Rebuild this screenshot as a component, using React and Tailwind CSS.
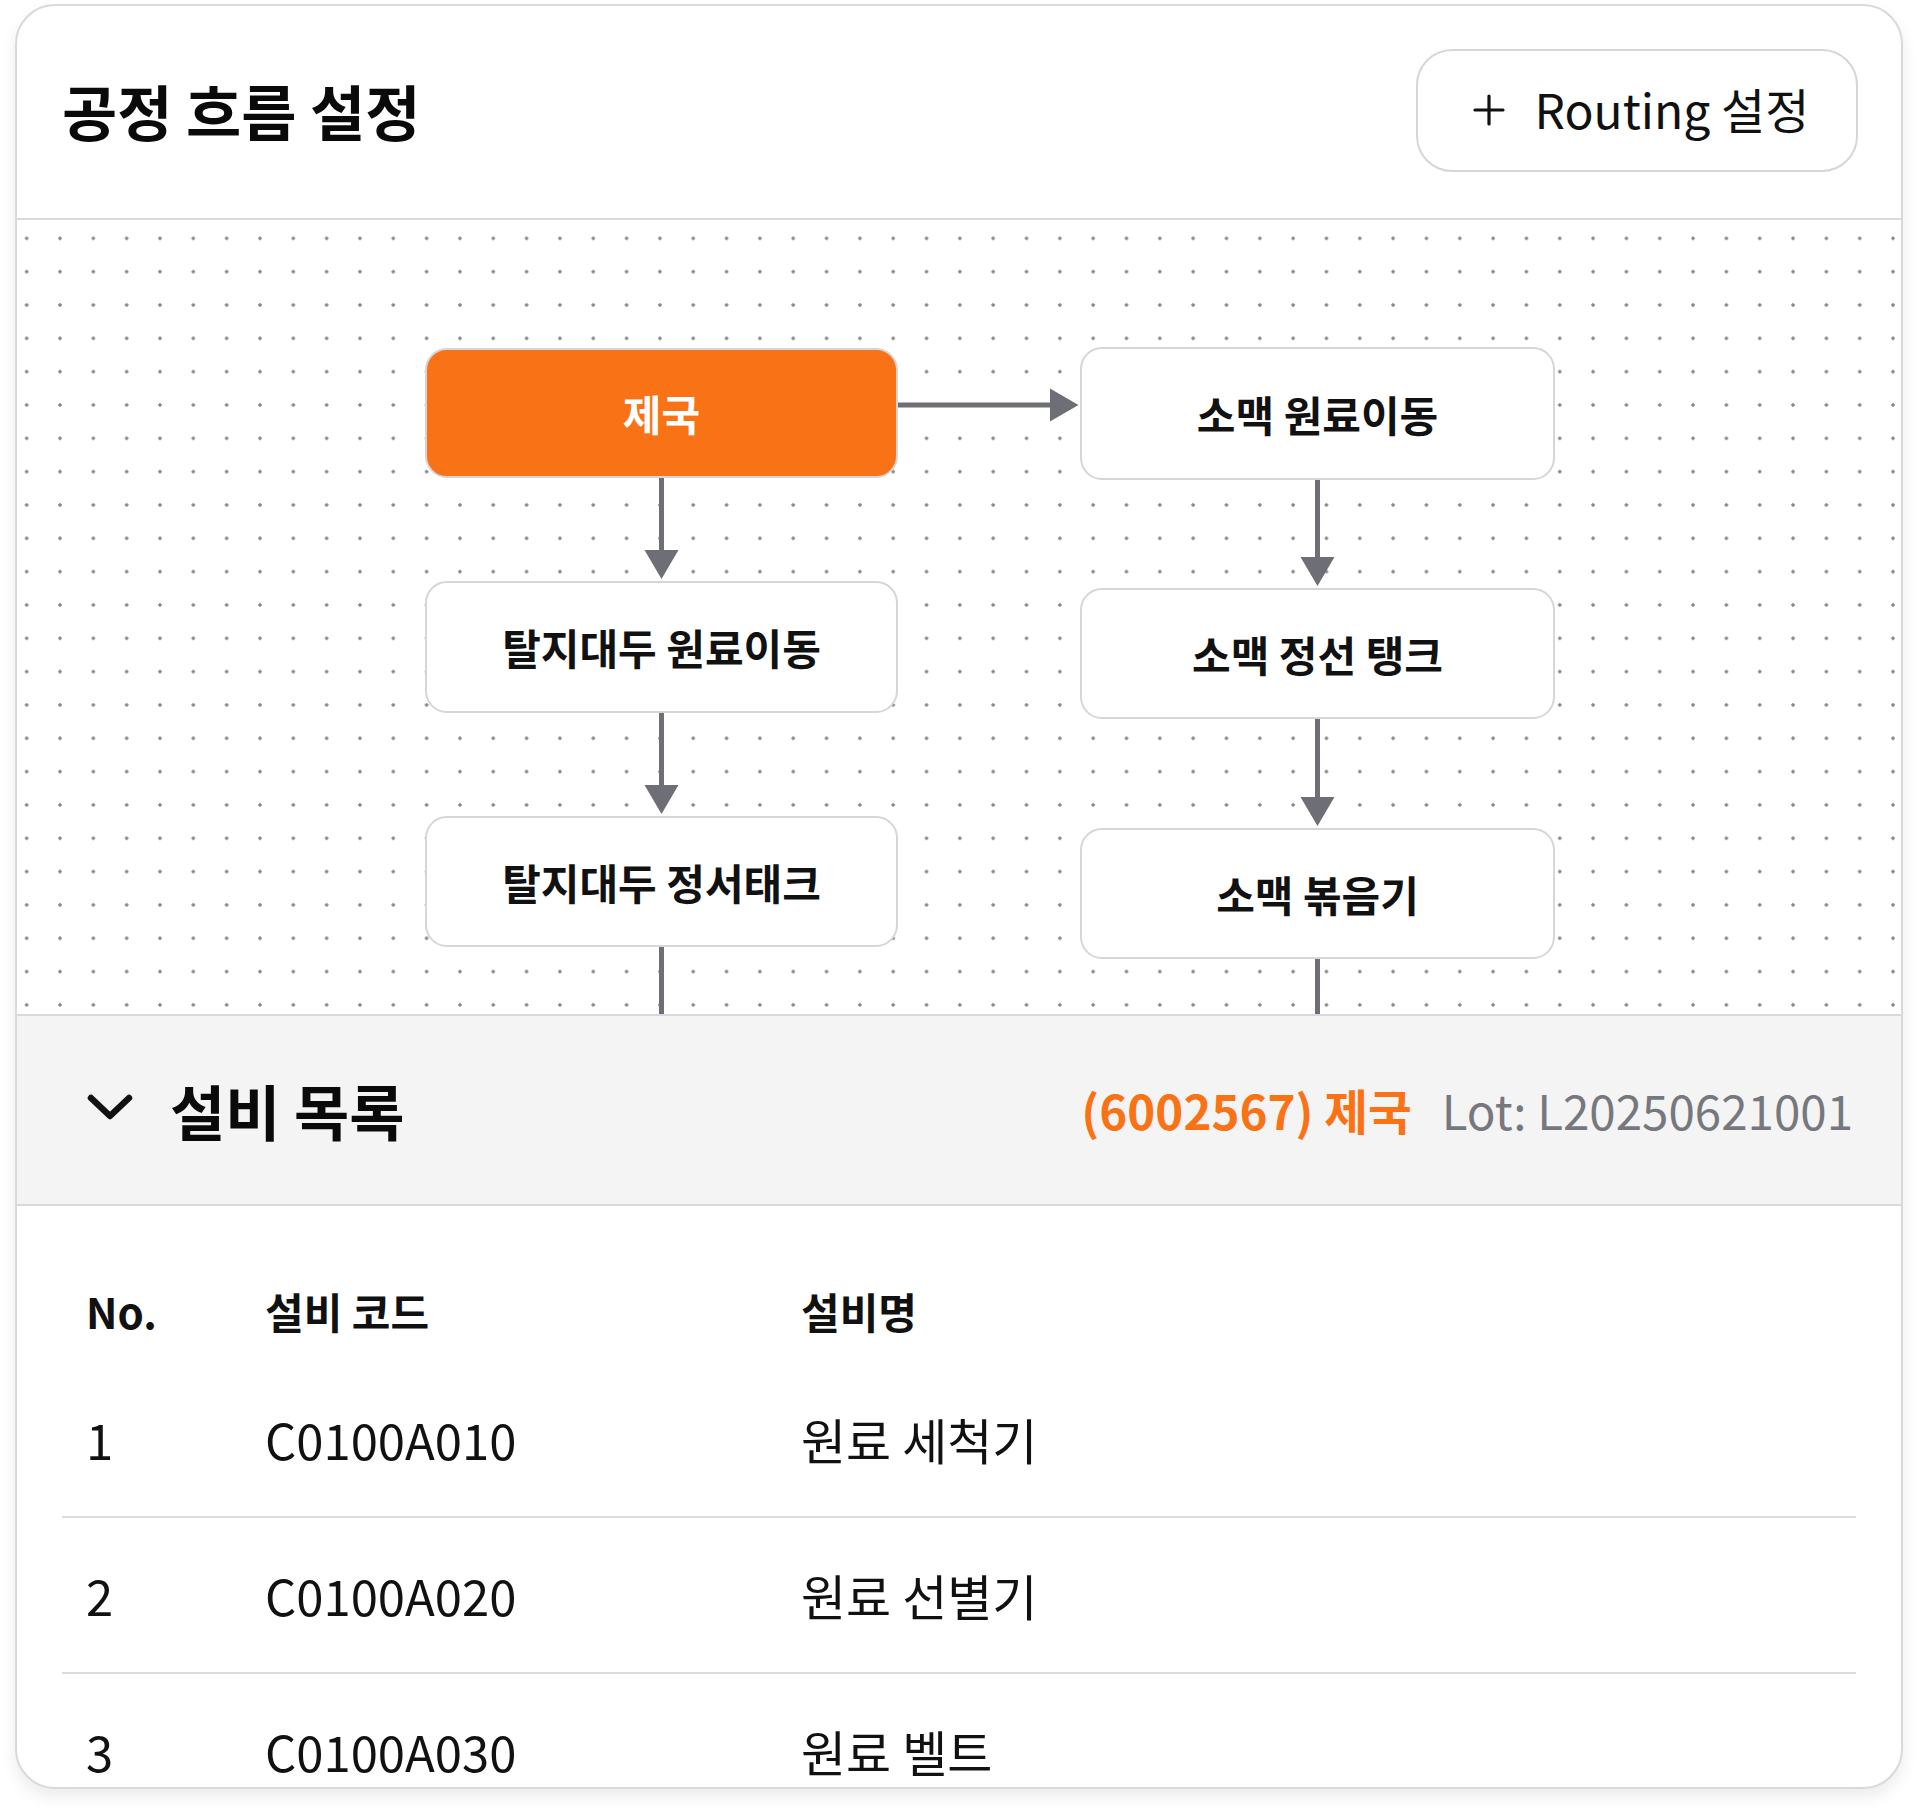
import React from "react";
import { Plus } from "lucide-react";

const leftNodes = [
  { label: "제국", top: 128, h: 130, active: true },
  { label: "탈지대두 원료이동", top: 361, h: 132 },
  { label: "탈지대두 정서태크", top: 596, h: 131 },
];
const rightNodes = [
  { label: "소맥 원료이동", top: 127, h: 133 },
  { label: "소맥 정선 탱크", top: 368, h: 131 },
  { label: "소맥 볶음기", top: 608, h: 131 },
];

function Node({ label, top, h, left, w, active }) {
  return (
    <div
      className={
        "absolute flex items-center justify-center rounded-[22px] border-2 border-[#d6d6da] text-[42px] font-bold leading-none " +
        (active ? "bg-[#f97316] text-white" : "bg-white text-[#111111]")
      }
      style={{ top, height: h, left, width: w }}
    >
      {label}
    </div>
  );
}

const rows = [
  { no: "1", code: "C0100A010", name: "원료 세척기" },
  { no: "2", code: "C0100A020", name: "원료 선별기" },
  { no: "3", code: "C0100A030", name: "원료 벨트" },
];

export default function App() {
  return (
    <div className="min-h-[1819px] bg-white pl-[15px] pt-[4px] font-['Noto_Sans_CJK_KR','Noto_Sans',sans-serif]">
      <div className="flex h-[1785px] w-[1888px] flex-col overflow-hidden rounded-[40px] border-2 border-[#d9d9dd] bg-white shadow-[0_8px_16px_rgba(0,0,0,0.08)]">
        {/* Header */}
        <header className="flex h-[214px] shrink-0 items-center justify-between border-b-2 border-[#d9d9dd] pl-[45px] pr-[43px]">
          <h1 className="mt-[-4px] text-[60px] font-bold leading-none text-[#0a0a0a]">공정 흐름 설정</h1>
          <button className="mt-[-3px] flex h-[123px] w-[442px] items-center justify-center gap-[22px] rounded-[36px] border-2 border-[#d6d6da] bg-white pb-[5px] text-[48px] leading-none text-[#111111]">
            <Plus size={48} strokeWidth={1.6} className="mt-[3px]" />
            <span>Routing 설정</span>
          </button>
        </header>

        {/* Canvas */}
        <div className="relative h-[796px] shrink-0 border-b-2 border-[#d9d9dd] bg-white bg-[radial-gradient(circle,#86868b_1.5px,transparent_1.7px)] bg-[length:33.333px_33.333px] bg-[position:-7px_1.7px]">
          <svg className="absolute left-0 top-0" width="1884" height="794">
            <g stroke="#6e6e76" strokeWidth="5" fill="none">
              <line x1="881" y1="185" x2="1036" y2="185" />
              <line x1="644.5" y1="258" x2="644.5" y2="333" />
              <line x1="644.5" y1="493" x2="644.5" y2="568" />
              <line x1="644.5" y1="727" x2="644.5" y2="800" />
              <line x1="1300.5" y1="260" x2="1300.5" y2="340" />
              <line x1="1300.5" y1="499" x2="1300.5" y2="580" />
              <line x1="1300.5" y1="739" x2="1300.5" y2="800" />
            </g>
            <g fill="#6e6e76">
              <polygon points="1033,168.5 1061.5,185 1033,201.5" />
              <polygon points="627.5,330 661.5,330 644.5,359" />
              <polygon points="627.5,565 661.5,565 644.5,594" />
              <polygon points="1283.5,337 1317.5,337 1300.5,366" />
              <polygon points="1283.5,577 1317.5,577 1300.5,606" />
            </g>
          </svg>
          {leftNodes.map((n) => (
            <Node key={n.label} {...n} left={408} w={473} />
          ))}
          {rightNodes.map((n) => (
            <Node key={n.label} {...n} left={1063} w={475} />
          ))}
        </div>

        {/* Section header */}
        <div className="flex h-[190px] shrink-0 items-center justify-between border-b-2 border-[#d9d9dd] bg-[#f4f4f5] pl-[70px] pr-[48px]">
          <div className="flex items-center gap-[37px]">
            <svg width="46" height="26" viewBox="0 0 46 26" className="mt-[-6px]">
              <polyline points="4,4 23,22 42,4" fill="none" stroke="#111111" strokeWidth="6.5" strokeLinecap="round" strokeLinejoin="round" />
            </svg>
            <h2 className="text-[60px] font-bold leading-none text-[#0a0a0a]">설비 목록</h2>
          </div>
          <div className="flex items-center gap-[30px] text-[47.5px] leading-none">
            <span className="font-bold text-[#f97316]">(6002567) 제국</span>
            <span className="text-[#77777e]">Lot: L20250621001</span>
          </div>
        </div>

        {/* Table */}
        <div className="px-[45px] pt-[52px]">
          <div className="grid h-[104px] grid-cols-[179px_536px_1fr] items-center pl-[24px] text-[42px] font-bold text-[#111111]">
            <div>No.</div>
            <div>설비 코드</div>
            <div>설비명</div>
          </div>
          {rows.map((r) => (
            <div
              key={r.no}
              className="grid h-[156px] grid-cols-[179px_536px_1fr] items-center border-b-2 border-[#dcdce0] pl-[24px] text-[49px] text-[#111111]"
            >
              <div>{r.no}</div>
              <div>{r.code}</div>
              <div>{r.name}</div>
            </div>
          ))}
        </div>
      </div>
    </div>
  );
}
